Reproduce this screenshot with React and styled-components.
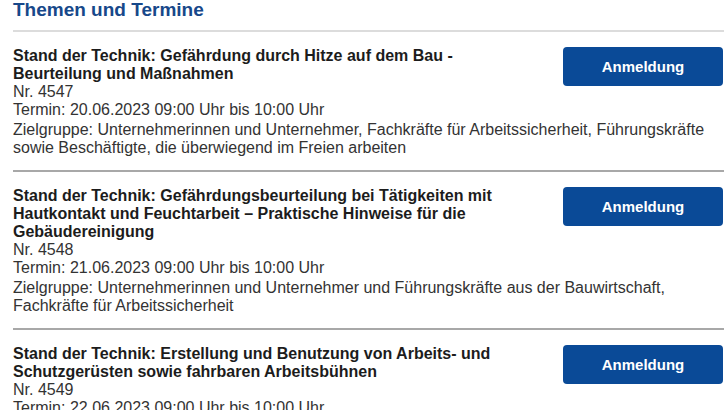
import React from "react";
import styled, { createGlobalStyle } from "styled-components";

const Global = createGlobalStyle`
  html, body { margin: 0; padding: 0; background: #fff; }
  body { font-family: "Liberation Sans", Arial, sans-serif; }
`;

const Page = styled.div`
  width: 711px;
  padding: 0 4px 0 13px;
`;

const Heading = styled.h2`
  margin: 0;
  padding-bottom: 10px;
  border-bottom: 2px solid #dcdcdc;
  font-size: 19px;
  line-height: 20px;
  font-weight: 700;
  color: #17488a;
`;

const Item = styled.div`
  padding: 15px 0 13px;
  border-top: ${(p) => (p.$first ? "none" : "2px solid #a8a8a8")};
  font-size: 16px;
  line-height: 18px;
  color: #333;
  &::after { content: ""; display: block; clear: both; }
`;

const Button = styled.button`
  float: right;
  width: 160px;
  height: 39px;
  margin: 0 1px 4px 30px;
  border: none;
  border-radius: 4px;
  background: #0a4a97;
  color: #fff;
  font-family: "Liberation Sans", Arial, sans-serif;
  font-size: 15px;
  font-weight: 700;
  cursor: pointer;
`;

const Title = styled.div`
  font-weight: 700;
  color: #1c1c1c;
`;

const Line = styled.div`
  margin-top: ${(p) => (p.$gap ? "2px" : "0")};
`;

const events = [
  {
    title: "Stand der Technik: Gefährdung durch Hitze auf dem Bau - Beurteilung und Maßnahmen",
    nr: "4547",
    termin: "20.06.2023 09:00 Uhr bis 10:00 Uhr",
    ziel: "Unternehmerinnen und Unternehmer, Fachkräfte für Arbeitssicherheit, Führungskräfte sowie Beschäftigte, die überwiegend im Freien arbeiten",
  },
  {
    title: "Stand der Technik: Gefährdungsbeurteilung bei Tätigkeiten mit Hautkontakt und Feuchtarbeit – Praktische Hinweise für die Gebäudereinigung",
    nr: "4548",
    termin: "21.06.2023 09:00 Uhr bis 10:00 Uhr",
    ziel: "Unternehmerinnen und Unternehmer und Führungskräfte aus der Bauwirtschaft, Fachkräfte für Arbeitssicherheit",
  },
  {
    title: "Stand der Technik: Erstellung und Benutzung von Arbeits- und Schutzgerüsten sowie fahrbaren Arbeitsbühnen",
    nr: "4549",
    termin: "22.06.2023 09:00 Uhr bis 10:00 Uhr",
  },
];

export default function App() {
  return (
    <>
      <Global />
      <Page>
        <Heading>Themen und Termine</Heading>
        {events.map((e, i) => (
          <Item key={e.nr} $first={i === 0}>
            <Button>Anmeldung</Button>
            <Title>{e.title}</Title>
            <Line>Nr. {e.nr}</Line>
            <Line>Termin: {e.termin}</Line>
            {e.ziel && <Line $gap>Zielgruppe: {e.ziel}</Line>}
          </Item>
        ))}
      </Page>
    </>
  );
}
